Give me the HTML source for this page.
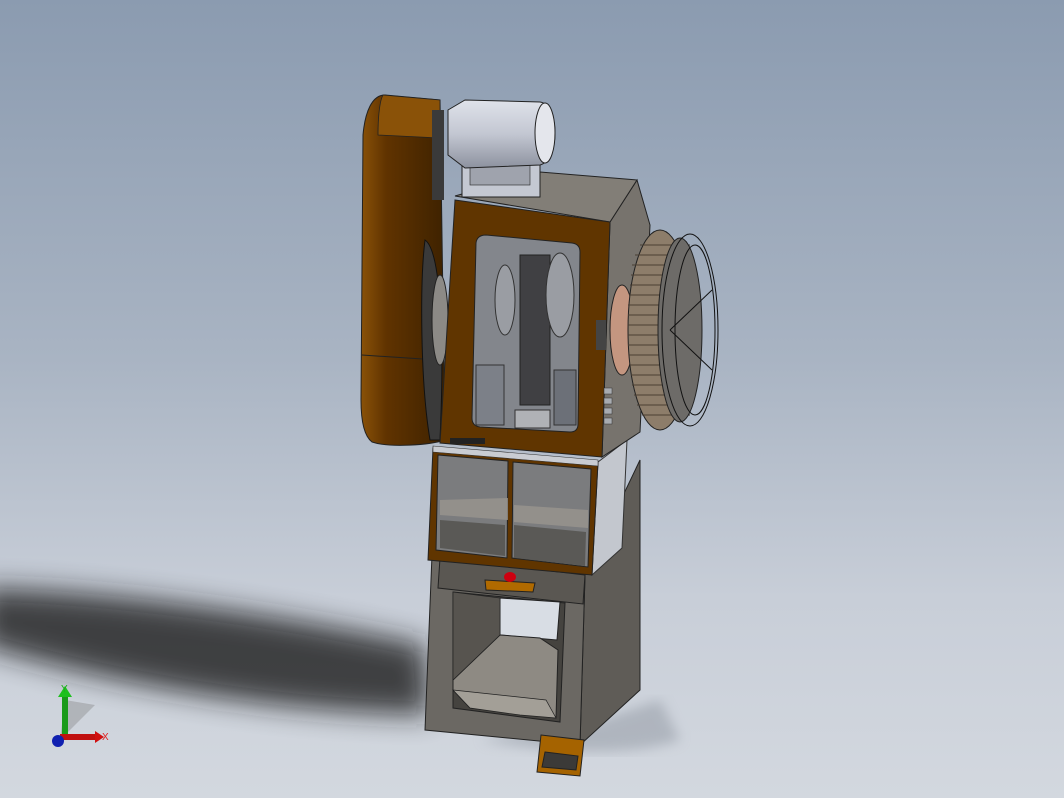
<!DOCTYPE html>
<html><head><style>
html,body{margin:0;padding:0;width:1064px;height:798px;overflow:hidden}
body{background:linear-gradient(180deg,#8b9bb0 0%,#a9b4c3 45%,#c8ced8 75%,#d3d8df 100%)}
svg{position:absolute;left:0;top:0}
</style></head><body>
<svg width="1064" height="798" viewBox="0 0 1064 798" xmlns="http://www.w3.org/2000/svg">
<defs>
<filter id="bl" x="-20%" y="-50%" width="140%" height="200%"><feGaussianBlur stdDeviation="14"/></filter>
<filter id="bl2"><feGaussianBlur stdDeviation="6"/></filter>
<linearGradient id="mot" x1="0" y1="0" x2="0" y2="1"><stop offset="0" stop-color="#dfe2ea"/><stop offset="0.5" stop-color="#c3c7d2"/><stop offset="1" stop-color="#8d929f"/></linearGradient>
<linearGradient id="org" x1="0" y1="0" x2="1" y2="0"><stop offset="0" stop-color="#8a5208"/><stop offset="0.3" stop-color="#603300"/><stop offset="1" stop-color="#3e2200"/></linearGradient>
</defs>
<!-- shadow -->
<path d="M-20 588 C100 590 260 610 425 645 L430 715 C300 712 150 695 -20 645 Z" fill="#1a1a1e" opacity="0.8" filter="url(#bl)"/>
<path d="M480 740 C540 750 620 760 680 740 L660 700 L600 720 Z" fill="#9aa0aa" opacity="0.6" filter="url(#bl2)"/>

<polygon points="585,575 640,460 640,690 580,745" fill="#5f5c57" stroke="#222" stroke-width="1"/>
<polygon points="432,555 585,575 580,745 425,730" fill="#6b6863" stroke="#222" stroke-width="1"/>
<polygon points="453,592 565,603 560,722 453,708" fill="#45433f" stroke="#222"/>
<polygon points="500,598 560,602 557,640 500,635" fill="#d8dde4" stroke="#222"/>
<polygon points="500,635 540,638 558,650 556,718 470,708 453,690 453,680" fill="#8e8a83" stroke="#222"/>
<polygon points="470,708 520,715 556,718 546,700 453,690" fill="#a39f97" stroke="#222" stroke-width="0.7"/>
<polygon points="453,592 500,598 500,635 453,680" fill="#57544f" stroke="#222" stroke-width="0.7"/>
<polygon points="440,558 585,575 583,604 438,588" fill="#5a5752" stroke="#222"/>
<polygon points="485,580 535,583 533,592 486,590" fill="#b06a00" stroke="#222"/>
<ellipse cx="510" cy="577" rx="6" ry="5" fill="#cc0010"/>
<polygon points="541,735 584,740 580,776 537,772" fill="#a56300" stroke="#222"/>
<polygon points="545,752 578,756 576,770 542,767" fill="#3b3a38" stroke="#222"/>

<polygon points="598,462 627,440 622,548 592,575" fill="#c3c7ce" stroke="#333"/>
<polygon points="433,448 598,462 592,575 428,560" fill="#603500" stroke="#222"/>
<polygon points="438,455 508,461 507,558 436,550" fill="#7b7c7e" stroke="#222"/>
<polygon points="513,462 591,469 588,567 512,558" fill="#7b7c7e" stroke="#222"/>
<polygon points="440,500 508,498 508,520 440,515" fill="#9a958e" opacity="0.8"/>
<polygon points="514,505 588,510 588,528 514,522" fill="#9a958e" opacity="0.8"/>
<polygon points="440,520 505,525 505,556 440,548" fill="#55544f" opacity="0.85"/>
<polygon points="514,525 586,532 585,566 514,558" fill="#55544f" opacity="0.85"/>
<polygon points="433,446 598,460 598,466 433,452" fill="#c9ccd2" stroke="#333" stroke-width="0.6"/>

<polygon points="610,222 637,180 650,225 640,432 602,457" fill="#77736d" stroke="#222"/>
<polygon points="455,196 540,172 637,180 610,222" fill="#827e77" stroke="#222"/>

<!-- belt guard -->
<path d="M385 95 L440 100 L445 440 C430 445 390 448 372 442 C364 436 361 420 361 400 L363 135 C365 112 372 95 385 95 Z" fill="url(#org)" stroke="#222"/>
<path d="M383 95 L440 100 L440 138 L378 135 C378 115 380 100 383 95 Z" fill="#8a5208" stroke="#222" stroke-width="0.8"/>
<line x1="362" y1="355" x2="438" y2="360" stroke="#222"/>
<path d="M425 240 C440 250 445 330 440 440 L430 440 C420 380 420 280 425 240 Z" fill="#3a3a3a" stroke="#111"/>
<ellipse cx="440" cy="320" rx="8" ry="45" fill="#8c8a86" stroke="#222"/>
<rect x="432" y="110" width="12" height="90" fill="#3a3a3a"/>

<rect x="462" y="165" width="78" height="32" fill="#c4c8d2" stroke="#222"/>
<rect x="470" y="165" width="60" height="20" fill="#9fa3ad" stroke="#222" stroke-width="0.6"/>
<path d="M448 110 L465 100 L540 102 C560 105 560 160 540 165 L465 168 L448 155 Z" fill="url(#mot)" stroke="#222"/>
<ellipse cx="545" cy="133" rx="10" ry="30" fill="#e4e6ec" stroke="#222"/>

<polygon points="455,200 610,222 602,457 440,443" fill="#603500" stroke="#222"/>
<path d="M486 235 L572 243 Q580 244 580 252 L578 424 Q578 432 570 432 L480 427 Q472 426 472 418 L476 243 Q477 235 486 235 Z" fill="#83868c" stroke="#222"/>
<rect x="520" y="255" width="30" height="150" fill="#404043" stroke="#222"/>
<ellipse cx="560" cy="295" rx="14" ry="42" fill="#9a9da3" stroke="#333"/>
<ellipse cx="505" cy="300" rx="10" ry="35" fill="#9a9da3" stroke="#333"/>
<rect x="476" y="365" width="28" height="60" fill="#7c8088" stroke="#333"/>
<rect x="554" y="370" width="22" height="55" fill="#6c7078" stroke="#333"/>
<rect x="515" y="410" width="35" height="18" fill="#b0b2b6" stroke="#333"/>
<rect x="450" y="438" width="35" height="6" fill="#222"/>
<rect x="596" y="320" width="10" height="30" fill="#444"/>
<g fill="#a8abb0" stroke="#333" stroke-width="0.5"><rect x="604" y="388" width="8" height="6"/><rect x="604" y="398" width="8" height="6"/><rect x="604" y="408" width="8" height="6"/><rect x="604" y="418" width="8" height="6"/></g>

<ellipse cx="622" cy="330" rx="12" ry="45" fill="#c49680" stroke="#222"/>
<ellipse cx="660" cy="330" rx="32" ry="100" fill="#8d7d6a" stroke="#222"/>
<g stroke="#4a3f33" stroke-width="1">
<line x1="640" y1="245" x2="690" y2="245"/><line x1="635" y1="255" x2="690" y2="255"/><line x1="632" y1="265" x2="690" y2="265"/><line x1="631" y1="275" x2="690" y2="275"/><line x1="630" y1="285" x2="690" y2="285"/><line x1="629" y1="295" x2="690" y2="295"/><line x1="628" y1="305" x2="690" y2="305"/><line x1="628" y1="315" x2="690" y2="315"/><line x1="628" y1="325" x2="690" y2="325"/><line x1="628" y1="335" x2="690" y2="335"/><line x1="628" y1="345" x2="690" y2="345"/><line x1="629" y1="355" x2="690" y2="355"/><line x1="630" y1="365" x2="690" y2="365"/><line x1="631" y1="375" x2="690" y2="375"/><line x1="632" y1="385" x2="690" y2="385"/><line x1="634" y1="395" x2="690" y2="395"/><line x1="637" y1="405" x2="690" y2="405"/><line x1="642" y1="415" x2="690" y2="415"/>
</g>
<ellipse cx="680" cy="330" rx="22" ry="92" fill="#6d6b68" stroke="#222"/>
<ellipse cx="690" cy="330" rx="28" ry="96" fill="none" stroke="#111"/>
<ellipse cx="695" cy="330" rx="20" ry="85" fill="none" stroke="#111"/>
<line x1="670" y1="330" x2="712" y2="290" stroke="#111"/><line x1="670" y1="330" x2="712" y2="370" stroke="#111"/>

<path d="M60 740 L95 705 L65 700 Z" fill="#777" opacity="0.35"/>
<rect x="62" y="695" width="6" height="44" fill="#1a9a1a"/>
<polygon points="58,697 65,686 72,697" fill="#1ec01e"/>
<rect x="60" y="734" width="36" height="6" fill="#c01010"/>
<polygon points="95,731 104,737 95,743" fill="#d01010"/>
<circle cx="58" cy="741" r="6" fill="#1020b0"/>
<text x="61" y="692" font-family="Liberation Sans,sans-serif" font-size="10" fill="#19b019">Y</text>
<text x="102" y="740" font-family="Liberation Sans,sans-serif" font-size="10" fill="#e02020">X</text>
</svg>
</body></html>
